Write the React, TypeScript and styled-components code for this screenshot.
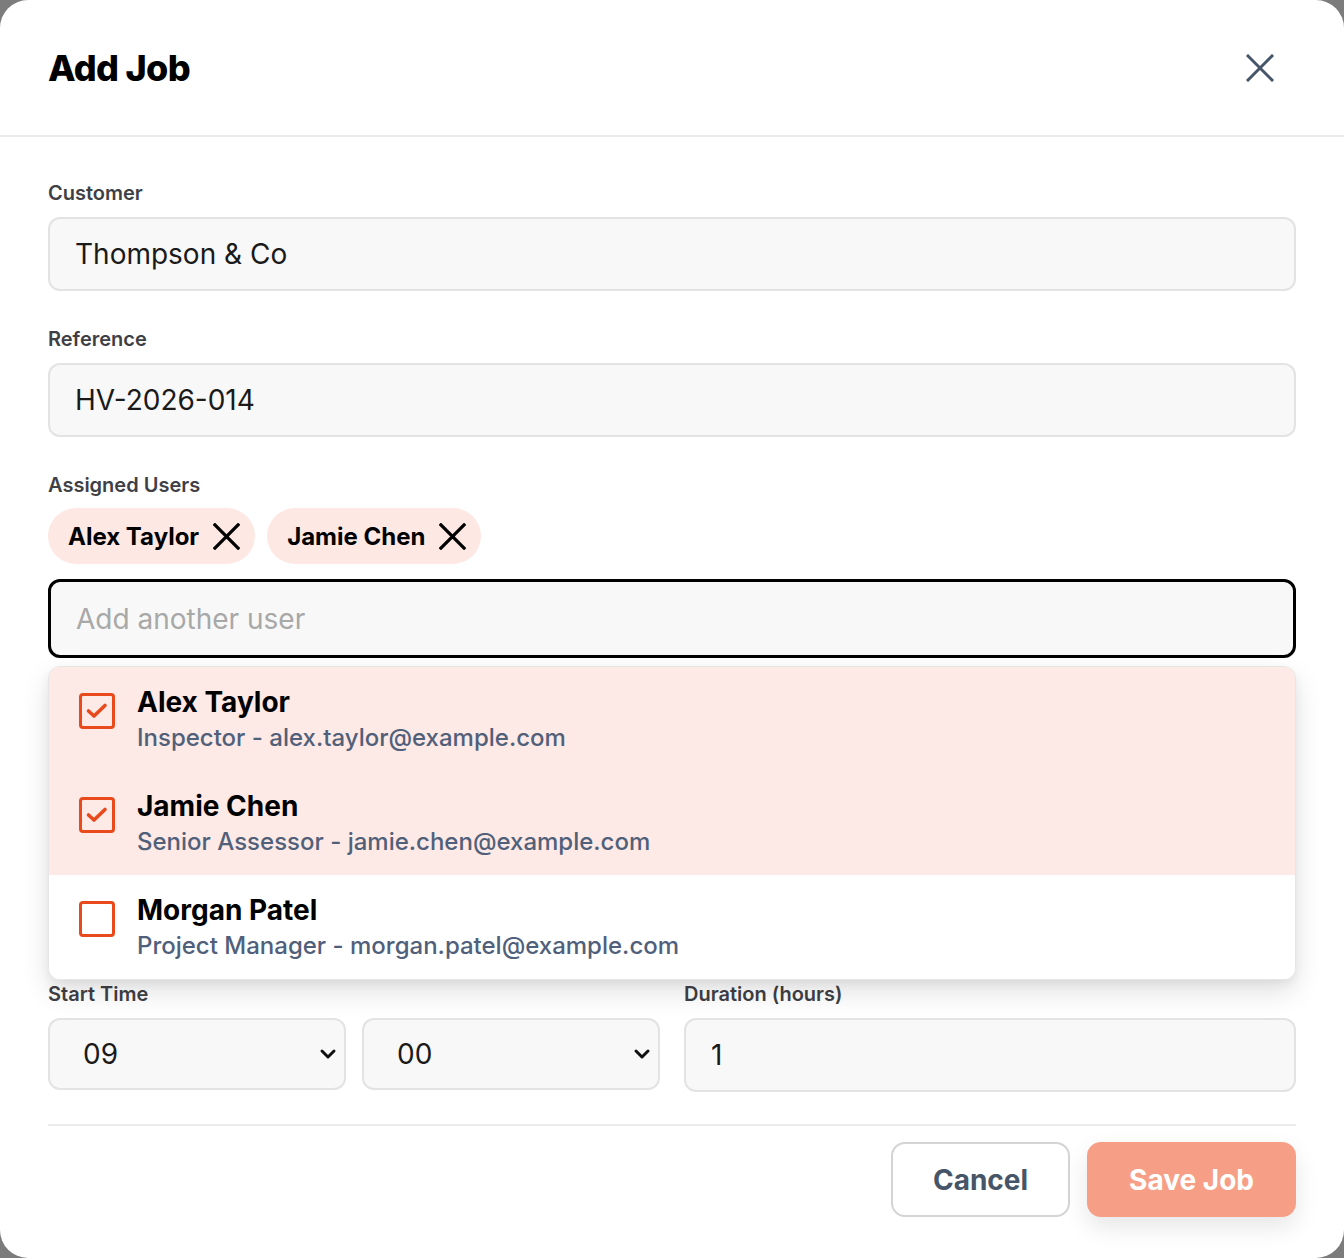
import React from 'react'
import styled, { createGlobalStyle } from 'styled-components'

const GlobalStyle = createGlobalStyle`
  * {
    box-sizing: border-box;
  }
  body {
    margin: 0;
    background: #7c7c7c;
    font-family: Inter, 'Noto Sans', 'Liberation Sans', sans-serif;
    color: #111;
  }
`

const Modal = styled.div`
  width: 1344px;
  height: 1258px;
  background: #fff;
  border-radius: 28px;
  display: flex;
  flex-direction: column;
  overflow: hidden;
`

const Header = styled.header`
  height: 137px;
  flex-shrink: 0;
  display: flex;
  align-items: center;
  justify-content: space-between;
  padding: 0 64px 0 48px;
  border-bottom: 2px solid #ebebeb;
`

const Title = styled.h1`
  margin: 0;
  font-size: 36px;
  font-weight: 800;
  letter-spacing: -0.7px;
  color: #000;
`

const IconButton = styled.button`
  width: 40px;
  height: 40px;
  padding: 0;
  border: 0;
  background: none;
  display: flex;
  align-items: center;
  justify-content: center;
  color: #475569;
  cursor: pointer;
`

const Body = styled.div`
  display: flex;
  flex-direction: column;
  gap: 36px;
  padding: 44px 48px 0;
`

const Field = styled.div`
  display: flex;
  flex-direction: column;
  gap: 12px;
  position: relative;
`

const Label = styled.label`
  font-size: 20px;
  line-height: 24px;
  font-weight: 600;
  color: #3f3f46;
`

const TextInput = styled.input<{ $height?: number }>`
  width: 100%;
  height: ${p => p.$height || 74}px;
  padding: 0 25px;
  border: 2px solid #e3e3e3;
  border-radius: 12px;
  background: #f8f8f8;
  font-family: inherit;
  font-size: 28px;
  color: #1a1a1a;
  outline: none;
`

const FocusInput = styled(TextInput)`
  height: 79px;
  border: 3px solid #000;
  margin-top: 3px;
  &::placeholder {
    color: #a8a8a8;
  }
`

const Chips = styled.div`
  display: flex;
  gap: 12px;
  margin-top: -1px;
`

const Chip = styled.span`
  display: inline-flex;
  align-items: center;
  gap: 14px;
  height: 56px;
  padding: 0 15px 0 20px;
  border-radius: 28px;
  background: #fde8e4;
  font-size: 24px;
  font-weight: 700;
  color: #000;
`

const Dropdown = styled.ul`
  position: absolute;
  left: 0;
  right: 0;
  top: calc(100% + 8px);
  margin: 0;
  padding: 0;
  list-style: none;
  background: #fff;
  border: 1px solid #e6e6e6;
  border-radius: 12px;
  overflow: hidden;
  box-shadow: 0 12px 28px rgba(0, 0, 0, 0.12), 0 4px 10px rgba(0, 0, 0, 0.05);
  z-index: 2;
`

const Option = styled.li<{ $selected?: boolean }>`
  height: 104px;
  display: flex;
  align-items: flex-start;
  gap: 22px;
  padding: 18px 30px 0;
  background: ${p => (p.$selected ? '#fde9e5' : '#fff')};
`

const Check = styled.span`
  width: 36px;
  height: 36px;
  margin-top: 8px;
  flex-shrink: 0;
  border: 3px solid #e84a1c;
  border-radius: 4px;
  display: flex;
  align-items: center;
  justify-content: center;
  color: #e84a1c;
`

const OptionText = styled.div`
  display: flex;
  flex-direction: column;
  gap: 4px;
`

const OptionName = styled.span`
  font-size: 28px;
  line-height: 34px;
  font-weight: 700;
  color: #000;
`

const OptionMeta = styled.span`
  font-size: 24px;
  line-height: 30px;
  font-weight: 500;
  color: #50607a;
`

const TimeRow = styled.div`
  display: grid;
  grid-template-columns: 1fr 1fr;
  gap: 24px;
`

const SelectPair = styled.div`
  display: grid;
  grid-template-columns: 1fr 1fr;
  gap: 16px;
`

const SelectWrap = styled.div`
  position: relative;
  color: #111;
`

const Select = styled.select`
  width: 100%;
  height: 72px;
  appearance: none;
  padding: 0 50px 0 33px;
  border: 2px solid #e3e3e3;
  border-radius: 12px;
  background: #f8f8f8;
  font-family: inherit;
  font-size: 28px;
  color: #1a1a1a;
  outline: none;
`

const Chevron = styled.svg`
  position: absolute;
  right: 8px;
  top: 50%;
  transform: translateY(-50%);
  pointer-events: none;
`

const Footer = styled.footer`
  margin: 32px 48px 0;
  padding-top: 16px;
  border-top: 2px solid #ebebeb;
  display: flex;
  justify-content: flex-end;
  gap: 17px;
`

const Button = styled.button<{ $primary?: boolean }>`
  height: 75px;
  padding: 0 40px;
  border-radius: 14px;
  font-family: inherit;
  font-size: 28px;
  font-weight: 700;
  cursor: pointer;
  border: 2px solid ${p => (p.$primary ? '#f79f86' : '#d4d4d4')};
  background: ${p => (p.$primary ? '#f79f86' : '#fff')};
  color: ${p => (p.$primary ? '#fff' : '#475569')};
  box-shadow: ${p => (p.$primary ? '0 10px 24px rgba(0, 0, 0, 0.1)' : 'none')};
`

const XIcon = ({ size, stroke = 3 }: { size: number; stroke?: number }) => (
  <svg width={size} height={size} viewBox="0 0 28 28" fill="none">
    <path d="M2 2 L26 26 M26 2 L2 26" stroke="currentColor" strokeWidth={stroke} strokeLinecap="square" />
  </svg>
)

const users = [
  { name: 'Alex Taylor', meta: 'Inspector - alex.taylor@example.com', selected: true },
  { name: 'Jamie Chen', meta: 'Senior Assessor - jamie.chen@example.com', selected: true },
  { name: 'Morgan Patel', meta: 'Project Manager - morgan.patel@example.com', selected: false },
]

const TimeSelect = ({ value, options }: { value: string; options: string[] }) => (
  <SelectWrap>
    <Select defaultValue={value}>
      {options.map(o => (
        <option key={o}>{o}</option>
      ))}
    </Select>
    <Chevron width="20" height="20" viewBox="0 0 20 20" fill="none">
      <path d="M4 7 L10 13 L16 7" stroke="currentColor" strokeWidth="3" strokeLinecap="round" strokeLinejoin="round" />
    </Chevron>
  </SelectWrap>
)

export default function App() {
  return (
    <>
      <GlobalStyle />
      <Modal>
        <Header>
          <Title>Add Job</Title>
          <IconButton aria-label="Close">
            <XIcon size={28} stroke={3} />
          </IconButton>
        </Header>
        <Body>
          <Field>
            <Label>Customer</Label>
            <TextInput defaultValue="Thompson & Co" />
          </Field>
          <Field>
            <Label>Reference</Label>
            <TextInput defaultValue="HV-2026-014" />
          </Field>
          <Field>
            <Label>Assigned Users</Label>
            <Chips>
              {users
                .filter(u => u.selected)
                .map(u => (
                  <Chip key={u.name}>
                    {u.name}
                    <XIcon size={27} stroke={3.4} />
                  </Chip>
                ))}
            </Chips>
            <FocusInput placeholder="Add another user" />
            <Dropdown>
              {users.map(u => (
                <Option key={u.name} $selected={u.selected}>
                  <Check>
                    {u.selected && (
                      <svg width="26" height="26" viewBox="0 0 26 26" fill="none">
                        <path d="M4.5 13 L10 18 L21 7.5" stroke="currentColor" strokeWidth="3.6" strokeLinecap="round" strokeLinejoin="round" />
                      </svg>
                    )}
                  </Check>
                  <OptionText>
                    <OptionName>{u.name}</OptionName>
                    <OptionMeta>{u.meta}</OptionMeta>
                  </OptionText>
                </Option>
              ))}
            </Dropdown>
          </Field>
          <Field>
            <Label>Site Address</Label>
            <TextInput $height={72} defaultValue="" />
          </Field>
          <Field>
            <Label>Date</Label>
            <TextInput $height={72} defaultValue="" />
          </Field>
          <TimeRow>
            <Field>
              <Label>Start Time</Label>
              <SelectPair>
                <TimeSelect value="09" options={['08', '09', '10', '11']} />
                <TimeSelect value="00" options={['00', '15', '30', '45']} />
              </SelectPair>
            </Field>
            <Field>
              <Label>Duration (hours)</Label>
              <TextInput defaultValue="1" />
            </Field>
          </TimeRow>
        </Body>
        <Footer>
          <Button>Cancel</Button>
          <Button $primary>Save Job</Button>
        </Footer>
      </Modal>
    </>
  )
}
